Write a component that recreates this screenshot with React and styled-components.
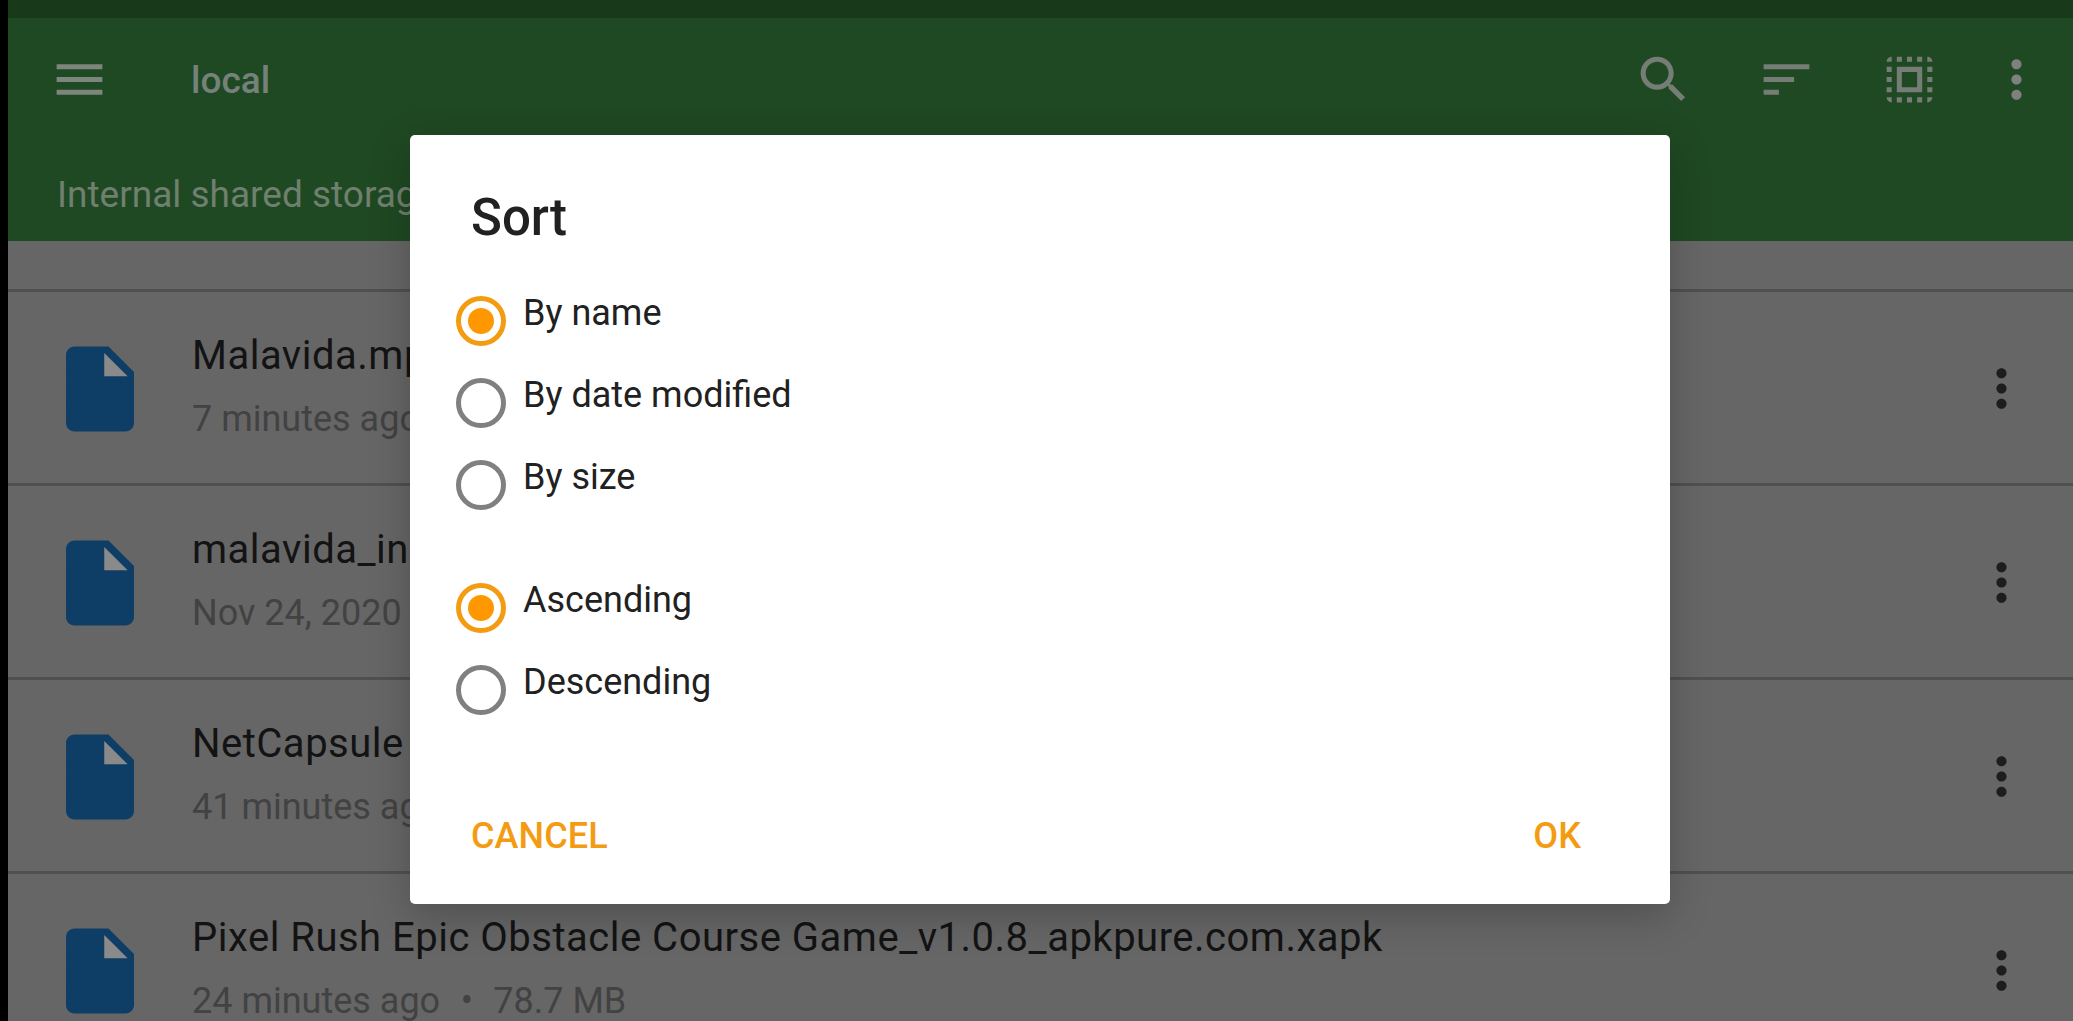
import React from "react";
import styled, { createGlobalStyle } from "styled-components";

const Global = createGlobalStyle`
  html, body { margin: 0; padding: 0; background: #000; }
  body { font-family: Roboto, "Liberation Sans", sans-serif; }
`;

const Screen = styled.div`
  position: relative;
  width: 2073px;
  height: 1021px;
  overflow: hidden;
  box-sizing: border-box;
  padding-left: 8px;
  background: #000;
`;
const Page = styled.div`
  height: 100%;
  display: flex;
  flex-direction: column;
  background: #666;
  overflow: hidden;
`;
const StatusBar = styled.div`
  flex: none;
  height: 18px;
  background: #18391a;
`;
const AppBar = styled.header`
  flex: none;
  height: 223px;
  background: #1f4922;
  display: flex;
  flex-direction: column;
`;
const Toolbar = styled.div`
  display: flex;
  align-items: center;
  height: 122px;
  padding: 0 12px 0 41px;
`;
const NavButton = styled.div`
  width: 142px;
  display: flex;
`;
const Title = styled.div`
  flex: 1;
  color: #75817a;
  font-size: 37px;
  font-weight: 500;
  padding-top: 2px;
`;
const ActionButton = styled.div`
  width: ${(p) => p.$w}px;
  display: flex;
  justify-content: center;
`;
const PathBar = styled.div`
  padding-left: 49px;
  padding-top: 32px;
  color: #6f7f70;
  font-size: 37px;
  line-height: 46px;
  white-space: nowrap;
`;
const Spacer = styled.div`
  flex: none;
  height: 48px;
  border-bottom: 3px solid #505050;
`;
const Row = styled.div`
  flex: none;
  box-sizing: border-box;
  height: 194px;
  display: flex;
  align-items: center;
  padding: 2px 41px 0 33px;
  border-bottom: 3px solid #505050;
`;
const FileSlot = styled.div`
  width: 143px;
  display: flex;
  margin-left: 8px;
`;
const TextCol = styled.div`
  flex: 1;
  margin-bottom: 5px;
  display: flex;
  flex-direction: column;
  gap: 16px;
  white-space: nowrap;
`;
const FileName = styled.div`
  color: #131313;
  font-size: 40px;
  letter-spacing: 0.5px;
  line-height: 50px;
`;
const Meta = styled.div`
  color: #424242;
  font-size: 36px;
  line-height: 44px;
`;
const Bullet = styled.span`
  margin: 0 20.5px;
`;
const Dialog = styled.div`
  position: absolute;
  left: 410px;
  top: 135px;
  width: 1260px;
  height: 769px;
  box-sizing: border-box;
  background: #fff;
  border-radius: 5px;
  box-shadow: 0 12px 40px rgba(0, 0, 0, 0.22);
  display: flex;
  flex-direction: column;
  color: #212121;
`;
const DialogTitle = styled.div`
  font-size: 51px;
  font-weight: 500;
  line-height: 60px;
  padding: 53px 0 0 61px;
`;
const RadioGroup = styled.div`
  display: flex;
  flex-direction: column;
  padding-left: 46px;
  margin-top: ${(p) => p.$top}px;
`;
const RadioRow = styled.div`
  display: flex;
  align-items: center;
  height: 82px;
  gap: 17px;
`;
const RadioRing = styled.div`
  width: 50px;
  height: 50px;
  box-sizing: border-box;
  border-radius: 50%;
  border: 5px solid ${(p) => (p.$on ? "#f39c12" : "#808080")};
  display: flex;
  align-items: center;
  justify-content: center;
`;
const RadioDot = styled.div`
  width: 26px;
  height: 26px;
  border-radius: 50%;
  background: #ff9800;
`;
const RadioLabel = styled.div`
  font-size: 36px;
  line-height: 44px;
  margin-bottom: 16px;
`;
const Footer = styled.div`
  margin-top: auto;
  display: flex;
  justify-content: space-between;
  padding: 0 89px 46px 61px;
`;
const TextButton = styled.div`
  color: #f39c12;
  font-size: 36px;
  font-weight: 500;
  letter-spacing: 0.1px;
  line-height: 44px;
`;

const Icon = ({ d, size = 61, color }) => (
  <svg width={size} height={size} viewBox="0 0 24 24" fill={color} style={{ display: "block" }}>
    <path d={d} />
  </svg>
);

const paths = {
  menu: "M3 18h18v-2H3v2zm0-5h18v-2H3v2zm0-7v2h18V6H3z",
  search:
    "M15.5 14h-.79l-.28-.27C15.41 12.59 16 11.11 16 9.5 16 5.91 13.09 3 9.5 3S3 5.91 3 9.5 5.91 16 9.5 16c1.61 0 3.09-.59 4.23-1.57l.27.28v.79l5 4.99L20.49 19l-4.99-5zm-6 0C7.01 14 5 11.99 5 9.5S7.01 5 9.5 5 14 7.01 14 9.5 11.99 14 9.5 14z",
  sort: "M3 18h6v-2H3v2zM3 6v2h18V6H3zm0 7h12v-2H3v2z",
  select:
    "M3 5h2V3c-1.1 0-2 .9-2 2zm0 8h2v-2H3v2zm4 8h2v-2H7v2zM3 9h2V7H3v2zm10-6h-2v2h2V3zm6 0v2h2c0-1.1-.9-2-2-2zM5 21v-2H3c0 1.1.9 2 2 2zm-2-4h2v-2H3v2zM9 3H7v2h2V3zm2 18h2v-2h-2v2zm8-8h2v-2h-2v2zm0 8c1.1 0 2-.9 2-2h-2v2zm0-12h2V7h-2v2zm0 8h2v-2h-2v2zm-4 4h2v-2h-2v2zm0-16h2V3h-2v2zM7 17h10V7H7v10zm2-8h6v6H9V9z",
  more:
    "M12 8c1.1 0 2-.9 2-2s-.9-2-2-2-2 .9-2 2 .9 2 2 2zm0 2c-1.1 0-2 .9-2 2s.9 2 2 2 2-.9 2-2-.9-2-2-2zm0 6c-1.1 0-2 .9-2 2s.9 2 2 2 2-.9 2-2-.9-2-2-2z",
  file: "M6 2c-1.1 0-1.99.9-1.99 2L4 20c0 1.1.89 2 1.99 2H18c1.1 0 2-.9 2-2V8l-6-6H6z",
  fold: "M13 9V3.5L18.5 9H13z",
};

const FileIcon = () => (
  <svg width="102" height="102" viewBox="0 0 24 24" style={{ display: "block" }}>
    <path d={paths.file} fill="#0e3e66" />
    <path d={paths.fold} fill="#8a8a8a" />
  </svg>
);

const files = [
  { name: "Malavida.mp4", meta: ["7 minutes ago", "19.4 MB"] },
  { name: "malavida_installer.apk", meta: ["Nov 24, 2020", "2.1 MB"] },
  { name: "NetCapsule VPN.apk", meta: ["41 minutes ago", "12.6 MB"] },
  { name: "Pixel Rush Epic Obstacle Course Game_v1.0.8_apkpure.com.xapk", meta: ["24 minutes ago", "78.7 MB"] },
];

const Radio = ({ on, label }) => (
  <RadioRow>
    <RadioRing $on={on}>{on && <RadioDot />}</RadioRing>
    <RadioLabel>{label}</RadioLabel>
  </RadioRow>
);

export default function App() {
  return (
    <Screen>
      <Global />
      <Page>
        <StatusBar />
        <AppBar>
          <Toolbar>
            <NavButton>
              <Icon d={paths.menu} color="#7c867c" />
            </NavButton>
            <Title>local</Title>
            <ActionButton $w={124}>
              <Icon d={paths.search} color="#767d76" />
            </ActionButton>
            <ActionButton $w={123}>
              <Icon d={paths.sort} color="#767d76" />
            </ActionButton>
            <ActionButton $w={123}>
              <Icon d={paths.select} color="#767d76" />
            </ActionButton>
            <ActionButton $w={90}>
              <Icon d={paths.more} color="#808080" />
            </ActionButton>
          </Toolbar>
          <PathBar>Internal shared storage</PathBar>
        </AppBar>
        <Spacer />
        {files.map((f) => (
          <Row key={f.name}>
            <FileSlot>
              <FileIcon />
            </FileSlot>
            <TextCol>
              <FileName>{f.name}</FileName>
              <Meta>
                {f.meta[0]}
                <Bullet>•</Bullet>
                {f.meta[1]}
              </Meta>
            </TextCol>
            <Icon d={paths.more} color="#1d1d1d" />
          </Row>
        ))}
      </Page>
      <Dialog>
        <DialogTitle>Sort</DialogTitle>
        <RadioGroup $top={32}>
          <Radio on label="By name" />
          <Radio label="By date modified" />
          <Radio label="By size" />
        </RadioGroup>
        <RadioGroup $top={41}>
          <Radio on label="Ascending" />
          <Radio label="Descending" />
        </RadioGroup>
        <Footer>
          <TextButton>CANCEL</TextButton>
          <TextButton>OK</TextButton>
        </Footer>
      </Dialog>
    </Screen>
  );
}
